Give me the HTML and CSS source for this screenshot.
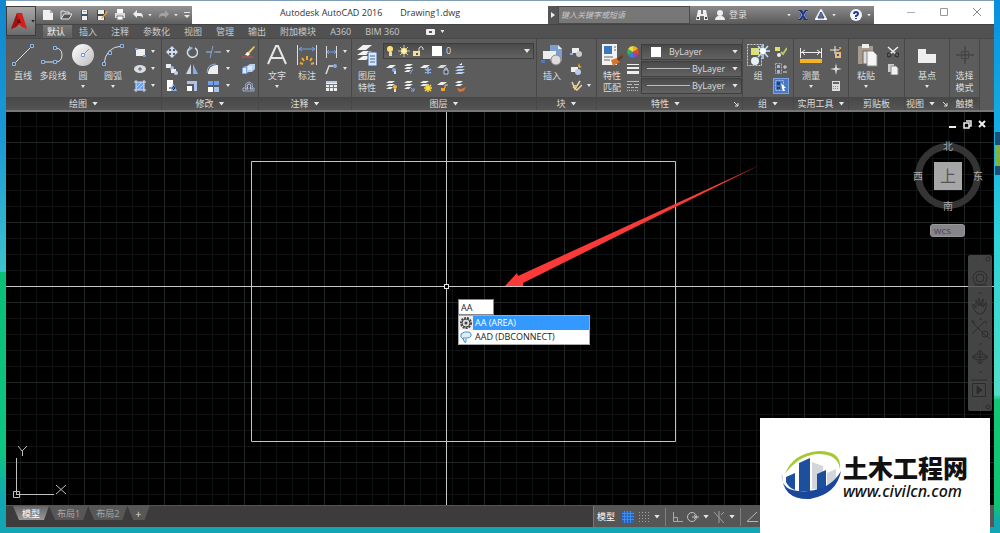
FILE: index.html
```html
<!DOCTYPE html>
<html lang="zh-CN">
  <head>
    <meta charset="UTF-8" />
    <meta name="viewport" content="width=device-width, initial-scale=1.0" />
    <title>Autodesk AutoCAD 2016 - Drawing1.dwg</title>
    <link rel="stylesheet" href="styles.css">
  </head>
  <body>
    <div class="window">
      <header class="titlebar">
        <div class="quick-access">
          <button type="button" class="tool" aria-label="新建"><svg width="12" height="12" viewBox="0 0 12 12"><path d="M1 1h7l3 3v7H1z" fill="#f0f0f0"/><path d="M8 1v3h3" fill="#aaa"/></svg></button>
          <button type="button" class="tool" aria-label="打开"><svg width="12" height="12" viewBox="0 0 12 12"><path d="M1 10V2h3l1 1h4v2" fill="none" stroke="#ddd"/><path d="M1 10l3-5h8l-3 5z" fill="#555" stroke="#e8e8e8"/></svg></button>
          <button type="button" class="tool" aria-label="保存"><svg width="12" height="12" viewBox="0 0 12 12"><path d="M3 1h7v10H3z" fill="#39576b"/><path d="M4 1h5v4H4zM4 7h5v4H4z" fill="#eee"/><path d="M5 2h3v1H5z" fill="#7fa6c0"/></svg></button>
          <button type="button" class="tool" aria-label="另存为"><svg width="12" height="12" viewBox="0 0 12 12"><path d="M1 1h8v10H1z" fill="#444"/><path d="M2 1h6v4H2zM2 7h6v4H2z" fill="#eee"/><path d="M11 2L6 8l-1 2 2-1 5-6z" fill="#e8a33a"/></svg></button>
          <button type="button" class="tool" aria-label="打印"><svg width="12" height="12" viewBox="0 0 12 12"><path d="M3 0h6v4H3z" fill="#fff"/><path d="M1 4h10v5H1z" fill="#ddd"/><path d="M3 7h6v4H3z" fill="#fff" stroke="#777"/></svg></button>
          <button type="button" class="tool" aria-label="放弃"><svg width="12" height="12" viewBox="0 0 12 12"><path d="M1 5l4-4v3h3q3 0 3 5-1-2-3-2H5v2z" fill="#eee"/></svg><i class="tri tiny"></i></button>
          <button type="button" class="tool" aria-label="重做"><svg width="12" height="12" viewBox="0 0 12 12"><path d="M11 5L7 1v3H4q-3 0-3 5 1-2 3-2h3v2z" fill="#a2a2a2"/></svg><i class="tri tiny"></i></button>
          <button type="button" class="tool more" aria-label="自定义"><svg width="6" height="7" viewBox="0 0 6 7"><path d="M0 0h6v1H0zM0 3h6L3 6z" fill="#e6e6e6"/></svg></button>
        </div>
        <h1 class="title"><span>Autodesk AutoCAD 2016</span><span>Drawing1.dwg</span></h1>
        <div class="infocenter">
          <button type="button" class="expand" aria-label="展开"><svg width="5" height="6" viewBox="0 0 5 6"><path d="M1 0l4 3-4 3z" fill="#eee"/></svg></button>
          <input class="search" type="text" aria-label="搜索" placeholder="键入关键字或短语" />
          <button type="button" class="tool" aria-label="查找"><svg width="12" height="12" viewBox="0 0 12 12"><path d="M2 1h3v4h2V1h3l2 10H8V7H4v4H0z" fill="#eee"/><path d="M1 8h2v2H1zM9 8h2v2H9z" fill="#444"/></svg></button>
          <button type="button" class="tool login"><svg width="12" height="12" viewBox="0 0 12 12"><circle cx="6" cy="4" r="3" fill="#eee"/><path d="M1 11q0-3 3-4h4q3 1 3 4z" fill="#eee"/></svg><span>登录</span></button>
          <i class="tri tiny"></i>
          <button type="button" class="tool" aria-label="Exchange"><svg width="12" height="12" viewBox="0 0 12 12"><path d="M1 1h4l1 3 2-3h3L8 6l3 5H7L6 8l-2 3H1l3-5z" fill="#1d3478"/><path d="M2 2l3 4-3 4M10 2L7 6l3 4" fill="none" stroke="#8fa8e8"/></svg></button>
          <button type="button" class="tool" aria-label="A360"><svg width="12" height="12" viewBox="0 0 12 12"><path d="M6 1l5 9H1z" fill="none" stroke="#e4e9fb" stroke-width="2"/><path d="M6 3l3 6H3z" fill="none" stroke="#3a5291"/><circle cx="6" cy="2" r="1" fill="#fff"/><circle cx="2" cy="10" r="1" fill="#fff"/><circle cx="10" cy="10" r="1" fill="#fff"/></svg><i class="tri tiny"></i></button>
          <button type="button" class="tool help" aria-label="帮助"><svg width="12" height="12" viewBox="0 0 12 12"><circle cx="6" cy="6" r="6" fill="#f4f6ff"/><path d="M4 5q0-2 2-2t2 2q0 1-2 2v1" fill="none" stroke="#223a8c" stroke-width="2"/><path d="M5 9h2v1H5z" fill="#223a8c"/></svg><i class="tri tiny"></i></button>
        </div>
        <div class="window-controls">
          <button type="button" aria-label="最小化"><svg width="10" height="10" viewBox="0 0 10 10"><path d="M1 5.500h8" stroke="#a4b0bd"/></svg></button>
          <button type="button" aria-label="最大化"><svg width="10" height="10" viewBox="0 0 10 10"><path d="M1.500 1.500h7v7h-7z" fill="none" stroke="#999"/></svg></button>
          <button type="button" aria-label="关闭"><svg width="10" height="10" viewBox="0 0 10 10"><path d="M1 1l8 8M9 1L1 9" stroke="#888"/></svg></button>
        </div>
      </header>

      <button type="button" class="app-menu" aria-label="应用程序菜单">
        <svg width="18" height="20" viewBox="0 0 18 20"><path d="M1 18L7 2h5l5 16-5-2-3-3-3 3z" fill="#d3201f"/><path d="M7 2l2 11-3 3-5 2z" fill="#a11214"/><path d="M9 7l2 5H7z" fill="#6a0a0c"/></svg>
        <i class="tri dark"></i>
      </button>

      <nav class="tabs">
        <a href="#" class="active">默认</a>
        <a href="#">插入</a>
        <a href="#">注释</a>
        <a href="#">参数化</a>
        <a href="#">视图</a>
        <a href="#">管理</a>
        <a href="#">输出</a>
        <a href="#">附加模块</a>
        <a href="#">A360</a>
        <a href="#">BIM 360</a>
        <button type="button" class="tool toggle" aria-label="最小化功能区"><svg width="9" height="6" viewBox="0 0 9 6"><rect width="9" height="6" rx="1" fill="#eee"/><path d="M3 2h3v2H3z" fill="#555"/></svg><i class="tri tiny"></i></button>
      </nav>

      <div class="ribbon">
        <section class="panel draw">
          <div class="tools">
            <button type="button" class="big"><svg width="24" height="24" viewBox="0 0 24 24"><path d="M3 21L21 3" stroke="#ddd"/><path d="M1.500 19.500h3v3h-3zM19.500 1.500h3v3h-3z" fill="#456" stroke="#8fb4ee"/></svg><span>直线</span></button>
            <button type="button" class="big"><svg width="24" height="24" viewBox="0 0 24 24"><path d="M2 19h12q7 0 7-7t-7-7" fill="none" stroke="#ddd"/><path d="M.500 17.500h3v3h-3zM12.500 17.500h3v3h-3zM12.500 3.500h3v3h-3z" fill="#456" stroke="#8fb4ee"/></svg><span>多段线</span></button>
            <button type="button" class="big"><svg width="24" height="24" viewBox="0 0 24 24"><defs><linearGradient id="disc" x1="0" y1="0" x2="1" y2="1"><stop offset="0" stop-color="#fff"/><stop offset="1" stop-color="#bcbcbc"/></linearGradient></defs><circle cx="12" cy="12" r="11" fill="url(#disc)"/><path d="M12 12l6-6" stroke="#6c9be0"/><path d="M10.500 10.500h3v3h-3z" fill="#fff" stroke="#6c9be0"/></svg><span>圆</span><i class="tri tiny"></i></button>
            <button type="button" class="big"><svg width="24" height="24" viewBox="0 0 24 24"><path d="M3 22Q4 4 21 3" fill="none" stroke="#ddd"/><path d="M1.500 19.500h3v3h-3zM7.500 8.500h3v3h-3zM19.500 1.500h3v3h-3z" fill="#456" stroke="#8fb4ee"/></svg><span>圆弧</span><i class="tri tiny"></i></button>
            <div class="small-grid one">
              <button type="button" class="tool" aria-label="矩形"><svg width="12" height="12" viewBox="0 0 12 12"><path d="M2 3h9v7H2z" fill="#eee"/><path d="M1 2h3v2H1zM9 9h3v2H9z" fill="#6fa0e6"/></svg><i class="tri tiny"></i></button>
              <button type="button" class="tool" aria-label="椭圆"><svg width="12" height="12" viewBox="0 0 12 12"><ellipse cx="6" cy="6" rx="6" ry="4" fill="#ddd"/><path d="M4 6h4M6 4v4" stroke="#47638f"/></svg><i class="tri tiny"></i></button>
              <button type="button" class="tool" aria-label="图案填充"><svg width="12" height="12" viewBox="0 0 12 12"><path d="M2 2h8v8H2z" fill="#6f9fe8"/><path d="M0 2h12M0 10h12M2 0v12M10 0v12" stroke="#d8e4f8"/><path d="M2 8l6-6M4 10l6-6" stroke="#b7cff5"/></svg><i class="tri tiny"></i></button>
            </div>
          </div>
          <h2>绘图 <i class="tri"></i></h2>
        </section>

        <section class="panel modify">
          <div class="tools">
            <div class="small-grid four">
              <button type="button" class="tool" aria-label="移动"><svg width="12" height="12" viewBox="0 0 12 12"><path d="M6 0l3 3H7v2h2V3l3 3-3 3V7H7v2h2l-3 3-3-3h2V7H3v2L0 6l3-3v2h2V3H3z" fill="#cfdcf3"/></svg></button>
              <button type="button" class="tool" aria-label="旋转"><svg width="12" height="12" viewBox="0 0 12 12"><path d="M4 2a5 5 0 1 0 5 0" fill="none" stroke="#d6dbe6" stroke-width="1.500"/><path d="M3 0l4 2-4 3z" fill="#8fb4ee"/></svg></button>
              <button type="button" class="tool" aria-label="修剪"><svg width="15" height="12" viewBox="0 0 15 12"><path d="M0 6h6M10 6h5" stroke="#a8bfe6"/><path d="M7 0L4 12" stroke="#7fa5e0"/><path d="M8 6h2" stroke="#9ab"/></svg><i class="tri tiny"></i></button>
              <button type="button" class="tool" aria-label="删除"><svg width="13" height="12" viewBox="0 0 13 12"><path d="M12 0l1 1-6 7-2-1z" fill="#f4cf55"/><path d="M5 6l3 2-2 2-3-1z" fill="#fff"/><path d="M3 9l3 1H1z" fill="#d33"/><path d="M0 11h11" stroke="#c55"/></svg></button>
              <button type="button" class="tool" aria-label="复制"><svg width="12" height="12" viewBox="0 0 12 12"><path d="M0 1h5v4H0z" fill="#eee"/><circle cx="6" cy="5" r="2" fill="#9bb8e6"/><path d="M5 6h5v4H5z" fill="#eee"/><circle cx="10" cy="10" r="2" fill="#bcd0f2"/></svg></button>
              <button type="button" class="tool" aria-label="镜像"><svg width="12" height="12" viewBox="0 0 12 12"><path d="M5 1v10H0z" fill="#cfd6e2"/><path d="M7 1v10h5z" fill="#87abea"/></svg></button>
              <button type="button" class="tool" aria-label="圆角"><svg width="15" height="12" viewBox="0 0 15 12"><path d="M2 11V9q1-6 8-7h2v9z" fill="#eee"/><path d="M1 10q0-9 9-9" fill="none" stroke="#87abea"/></svg><i class="tri tiny"></i></button>
              <button type="button" class="tool" aria-label="分解"><svg width="13" height="12" viewBox="0 0 13 12"><path d="M0 5l3-2h4v6l-3 2H0z" fill="#82a8df"/><path d="M5 3l3-2h5v5l-3 3H5z" fill="#b9cfef"/><path d="M1 5h3v5H1zM6 3h4v4H6z" fill="#dce7f7"/></svg></button>
              <button type="button" class="tool" aria-label="拉伸"><svg width="12" height="12" viewBox="0 0 12 12"><path d="M1 0h6v11H1z" fill="#fff"/><path d="M7 3l4 8H5z" fill="#87abea"/><path d="M3 8h5M7 6l2 2-2 2" stroke="#234" fill="none"/></svg></button>
              <button type="button" class="tool" aria-label="缩放"><svg width="12" height="12" viewBox="0 0 12 12"><path d="M1 1h10v10H8V4H1z" fill="#a9c3ee"/><path d="M1 6h5v5H1z" fill="#fff"/></svg></button>
              <button type="button" class="tool" aria-label="阵列"><svg width="15" height="12" viewBox="0 0 15 12"><path d="M2 1h5v4H2zM8 1h5v4H8z" fill="#6fa0e6"/><path d="M8 7h5v5H8z" fill="#a9c3ee"/><path d="M2 7h5v5H2z" fill="#fff"/></svg><i class="tri tiny"></i></button>
              <button type="button" class="tool" aria-label="偏移"><svg width="13" height="12" viewBox="0 0 13 12"><path d="M1 11V8h3q-2-5 3-6 5 1 3 6h2v3z" fill="none" stroke="#95aed6"/><path d="M3 9h3q-2-5 1-5t1 5h3" fill="none" stroke="#c8d2e4"/></svg></button>
            </div>
          </div>
          <h2>修改 <i class="tri"></i></h2>
        </section>

        <section class="panel annotate">
          <div class="tools">
            <button type="button" class="big"><svg width="24" height="24" viewBox="0 0 24 24"><path d="M3 21L11 3h2l8 18M6 15h12" fill="none" stroke="#e6e6e6" stroke-width="2"/></svg><span>文字</span><i class="tri tiny"></i></button>
            <button type="button" class="big"><svg width="24" height="24" viewBox="0 0 24 24"><path d="M2.500 2v20M21.500 2v20" stroke="#ddd"/><path d="M4 6h16M7 4L4 6l3 2M17 4l3 2-3 2" stroke="#6fa0e6" fill="none"/><path d="M12 13v4M7 15l2 3M17 15l-2 3M5 20l3 1M19 20l-3 1" stroke="#f2a62c" stroke-width="2"/></svg><span>标注</span></button>
            <div class="small-grid one">
              <button type="button" class="tool" aria-label="线性"><svg width="13" height="12" viewBox="0 0 13 12"><path d="M1.500 0v12M11.500 0v12" stroke="#ddd"/><path d="M2 6h9M4 4L2 6l2 2M9 4l2 2-2 2" stroke="#6fa0e6" fill="none"/></svg><i class="tri tiny"></i></button>
              <button type="button" class="tool" aria-label="引线"><svg width="13" height="12" viewBox="0 0 13 12"><path d="M1 11l3-8h4" fill="none" stroke="#ddd" stroke-width="1.500"/><circle cx="10" cy="3" r="2" fill="#87abea"/></svg><i class="tri tiny"></i></button>
              <button type="button" class="tool" aria-label="表格"><svg width="12" height="12" viewBox="0 0 12 12"><path d="M1 1h11v10H1z" fill="#eee"/><path d="M1 4.500h11M1 7.500h11M4.500 4v7M8.500 4v7" stroke="#777"/><path d="M1 1h11v2H1z" fill="#b9ccec"/></svg></button>
            </div>
          </div>
          <h2>注释 <i class="tri"></i></h2>
        </section>

        <section class="panel layers">
          <div class="tools">
            <button type="button" class="big"><svg width="24" height="24" viewBox="0 0 24 24"><path d="M2 7l6-5h9l-6 5zM2 12l6-4h9l-6 4zM2 17l6-4h9l-6 4z" fill="#f2f2f2"/><path d="M13 9h9v14h-9z" fill="#dce8fa" stroke="#3d6296"/><path d="M15 13h5M15 16h5M15 19h5" stroke="#3d6296"/></svg><span>图层<br>特性</span></button>
            <div class="layer-side">
              <div class="combo">
                <svg width="44" height="12" viewBox="0 0 44 12"><circle cx="6" cy="4" r="3" fill="#ffe27a"/><path d="M5 7h3v4H5z" fill="#e8dcb0"/><path d="M20 0v12M14 6h12M16 2l8 8M24 2l-8 8" stroke="#cfc890"/><circle cx="20" cy="6" r="3" fill="#fff0a0"/><path d="M29 6h7v5h-7z" fill="#f6e08a"/><path d="M35 6V3q2-3 4 0v2" fill="none" stroke="#ddd"/><path d="M32 8h2v2h-2z" fill="#555"/></svg>
                <i class="swatch"></i>
                <select aria-label="图层"><option>0</option></select>
                <i class="tri"></i>
              </div>
              <div class="small-grid five">
                <button type="button" class="tool" aria-label="关闭图层"><svg width="12" height="12" viewBox="0 0 12 12"><path d="M0 5l4-3h6L6 5z" fill="#eee"/><circle cx="8" cy="7" r="2" fill="#7fa8e8"/><path d="M8 8h2v3H8z" fill="#cfe0fb"/></svg></button>
                <button type="button" class="tool" aria-label="隔离"><svg width="12" height="12" viewBox="0 0 12 12"><path d="M1 3l3-2h6L7 3zM1 6l3-2h6L7 6zM1 9l3-2h4L6 9z" fill="#eee"/><path d="M10 6L7 11" stroke="#7fa8e8"/></svg></button>
                <button type="button" class="tool" aria-label="冻结"><svg width="12" height="12" viewBox="0 0 12 12"><path d="M0 5l4-3h6L6 5z" fill="#eee"/><path d="M8 4v7M5 6l6 4M11 6l-6 4" stroke="#8fb8f6" stroke-width="1.500"/></svg></button>
                <button type="button" class="tool" aria-label="锁定"><svg width="12" height="12" viewBox="0 0 12 12"><path d="M0 5l4-3h6L6 5z" fill="#ddd"/><path d="M7 7h4v4H7z" fill="#444" stroke="#b9ccec"/><path d="M8 7V5h2v2" fill="none" stroke="#ccc"/></svg></button>
                <button type="button" class="tool" aria-label="置为当前"><svg width="12" height="12" viewBox="0 0 12 12"><path d="M1 5l3-2h7L8 5zM1 8l3-2h7L8 8zM1 11l3-2h7l-3 2z" fill="#b5cdf2"/><path d="M5 2l3-2v2z" fill="#fff"/></svg></button>
                <button type="button" class="tool" aria-label="打开所有图层"><svg width="12" height="12" viewBox="0 0 12 12"><path d="M0 3l3-2h6L6 3zM0 6l3-2h6L6 6zM0 9l3-2h4L5 9z" fill="#eee"/><circle cx="9" cy="7" r="2" fill="#f4b63f"/><path d="M8 9h2v3H8z" fill="#eee0a0"/></svg></button>
                <button type="button" class="tool" aria-label="取消隔离"><svg width="12" height="12" viewBox="0 0 12 12"><path d="M1 3l3-2h6L7 3zM1 6l3-2h6L7 6zM1 9l3-2h4L6 9z" fill="#eee"/><path d="M7 7l4 4M11 8v3H8" stroke="#7fa8e8" fill="none"/></svg></button>
                <button type="button" class="tool" aria-label="解冻所有图层"><svg width="12" height="12" viewBox="0 0 12 12"><path d="M0 3l3-2h6L6 3zM0 6l3-2h6L6 6z" fill="#eee"/><path d="M8 4v8M4 8h8M5 5l6 6M11 5l-6 6" stroke="#ffd93b" stroke-width="1.500"/></svg></button>
                <button type="button" class="tool" aria-label="解锁"><svg width="12" height="12" viewBox="0 0 12 12"><path d="M0 5l4-3h6L6 5z" fill="#eee"/><path d="M4 8h4v3H4z" fill="#f2a62c"/><path d="M8 8V5h3" fill="none" stroke="#f4c96a"/></svg></button>
                <button type="button" class="tool" aria-label="图层匹配"><svg width="12" height="12" viewBox="0 0 12 12"><path d="M1 3l3-2h5L6 3zM1 6l3-2h5L6 6z" fill="#eee"/><path d="M3 8l4 1 5-2-2 4-5 1z" fill="#d9742b"/></svg></button>
              </div>
            </div>
          </div>
          <h2>图层 <i class="tri"></i></h2>
        </section>

        <section class="panel block">
          <div class="tools">
            <button type="button" class="big"><svg width="24" height="24" viewBox="0 0 24 24"><path d="M10 2h8l4 4v12H10z" fill="#7f9fcb"/><path d="M18 2v4h4" fill="#dfeaff"/><path d="M3 8h13v8H3z" fill="#eee"/><path d="M1 17h4v3H1z" fill="#4f79b8"/><circle cx="16" cy="17" r="5" fill="#ddd" stroke="#888"/></svg><span>插入</span></button>
            <div class="small-grid one">
              <button type="button" class="tool" aria-label="创建块"><svg width="12" height="12" viewBox="0 0 12 12"><path d="M2 2h7v5H2z" fill="#eee"/><circle cx="9" cy="8" r="3" fill="#ccc"/><path d="M0 7h3v2H0z" fill="#87abea"/></svg></button>
              <button type="button" class="tool" aria-label="编辑块"><svg width="12" height="12" viewBox="0 0 12 12"><path d="M1 4h7v5H1z" fill="#eee"/><circle cx="8" cy="9" r="3" fill="#b9ccec"/><path d="M9 0l1 3 2 1-3 1-1-2z" fill="#f2a62c"/></svg></button>
              <button type="button" class="tool" aria-label="编辑属性"><svg width="12" height="12" viewBox="0 0 12 12"><path d="M2 2l3 7 5-8M3 7l4 3 5-5" fill="none" stroke="#e8d9b0" stroke-width="1.500"/><path d="M4 5h3v3H4z" fill="#f4c23f"/></svg><i class="tri tiny"></i></button>
            </div>
          </div>
          <h2>块 <i class="tri"></i></h2>
        </section>

        <section class="panel properties">
          <div class="tools">
            <button type="button" class="big"><svg width="24" height="24" viewBox="0 0 24 24"><path d="M2 1h15v21H2z" fill="#f2f2f2"/><path d="M4 3h8v8H4z" fill="#3d77bd"/><path d="M14 4h2M14 7h2M4 14h9M4 17h6" stroke="#666"/><path d="M11 17l6-2 3 4-7 4z" fill="#d9742b"/><path d="M17 16l5-4 1 2-4 4z" fill="#6b3a17"/></svg><span>特性<br>匹配</span></button>
            <div class="property-rows">
              <label class="property"><svg width="12" height="12" viewBox="0 0 12 12"><path d="M6 6V0a6 6 0 0 1 5 3z" fill="#f2b01e"/><path d="M6 6l5-3a6 6 0 0 1 0 6z" fill="#e2452b"/><path d="M6 6l5 3a6 6 0 0 1-5 3z" fill="#9b3fc4"/><path d="M6 6v6a6 6 0 0 1-5-3z" fill="#3b7be0"/><path d="M6 6L1 9a6 6 0 0 1 0-6z" fill="#35b24a"/><path d="M6 6L1 3a6 6 0 0 1 5-3z" fill="#e6e04a"/></svg>
                <span class="combo"><i class="swatch"></i><select aria-label="对象颜色"><option>ByLayer</option></select><i class="tri"></i></span></label>
              <label class="property"><svg width="12" height="12" viewBox="0 0 12 12"><path d="M0 1h12v1H0zM0 4h12v2H0zM0 8h12v3H0z" fill="#eee"/></svg>
                <span class="combo"><i class="rule"></i><select aria-label="线宽"><option>ByLayer</option></select><i class="tri"></i></span></label>
              <label class="property"><svg width="12" height="12" viewBox="0 0 12 12"><path d="M0 1.500h12" stroke="#bbb"/><path d="M0 4.500h12" stroke="#bbb" stroke-dasharray="5 2"/><path d="M0 7.500h12" stroke="#bbb" stroke-dasharray="3 1"/><path d="M0 10.500h12" stroke="#bbb" stroke-dasharray="1 1"/></svg>
                <span class="combo"><i class="rule"></i><select aria-label="线型"><option>ByLayer</option></select><i class="tri"></i></span></label>
            </div>
          </div>
          <h2>特性 <i class="tri"></i><svg class="launcher" width="6" height="6" viewBox="0 0 6 6"><path d="M1 1l4 4M5 2v3H2" fill="none" stroke="#ddd"/></svg></h2>
        </section>

        <section class="panel group">
          <div class="tools">
            <button type="button" class="big"><svg width="24" height="24" viewBox="0 0 24 24"><path d="M1.500 1.500h14v21h-14z" fill="none" stroke="#ccc" stroke-dasharray="2 1"/><path d="M5 5h8v7H5z" fill="#dbe070"/><circle cx="9" cy="18" r="4" fill="#e6f2fa"/><path d="M17 1v15M10 8h14M12 3l10 11M22 3L12 14" stroke="#bfe2ff" stroke-width="1.500"/><circle cx="17" cy="8" r="3" fill="#fff"/></svg><span>组</span></button>
            <div class="small-grid one">
              <button type="button" class="tool" aria-label="解除编组"><svg width="12" height="12" viewBox="0 0 12 12"><path d="M0 1h5v4H0z" fill="#dbe070"/><circle cx="4" cy="9" r="2" fill="#eee"/><path d="M6 6l2 2 4-6" fill="none" stroke="#bcc36a" stroke-width="2"/></svg></button>
              <button type="button" class="tool" aria-label="组编辑"><svg width="12" height="12" viewBox="0 0 12 12"><path d="M.500.500h6v10h-6z" fill="none" stroke="#aaa" stroke-dasharray="2 1"/><path d="M2 2h3v3H2zM2 7h3v3H2z" fill="#9bb8e6"/><path d="M8 4h4M10 2v4M8 9h4" stroke="#ddd"/></svg></button>
              <button type="button" class="tool selected" aria-label="组选择"><svg width="12" height="12" viewBox="0 0 12 12"><path d="M.500.500h8v10h-8z" fill="none" stroke="#9bbcf0" stroke-dasharray="2 1"/><path d="M2 2h3v3H2zM2 7h3v2H2z" fill="#223f66"/><path d="M6 3l5 5H9l1 3H8L7 8z" fill="#fff"/></svg></button>
            </div>
          </div>
          <h2>组 <i class="tri"></i></h2>
        </section>

        <section class="panel utilities">
          <div class="tools">
            <button type="button" class="big"><svg width="24" height="24" viewBox="0 0 24 24"><path d="M1.500 5v10M22.500 5v10M2 9.500h20M6 7L3 9l3 3M18 7l3 2-3 3" fill="none" stroke="#eee"/><path d="M1 16h22v4H1z" fill="#f5b224"/></svg><span>测量</span><i class="tri tiny"></i></button>
            <div class="small-grid one">
              <button type="button" class="tool" aria-label="快速选择"><svg width="12" height="12" viewBox="0 0 12 12"><path d="M5 0v8M0 4h9" stroke="#eee"/><path d="M5 6h6v6H5z" fill="#e4b98c"/><path d="M7 8h2v2H7z" fill="#555"/><path d="M9 1l2 2M11 1L9 4" stroke="#f2a62c"/></svg></button>
              <button type="button" class="tool" aria-label="点"><svg width="12" height="12" viewBox="0 0 12 12"><path d="M6 0l1 5 5 1-5 1-1 5-1-5-5-1 5-1z" fill="#ddd"/></svg></button>
              <button type="button" class="tool" aria-label="计算器"><svg width="12" height="12" viewBox="0 0 12 12"><path d="M2 1h8v10H2z" fill="#ddd"/><path d="M3 2h6v2H3z" fill="#666"/><path d="M3 6.500h6M3 8.500h6" stroke="#888" stroke-dasharray="1 1"/></svg></button>
            </div>
          </div>
          <h2>实用工具 <i class="tri"></i></h2>
        </section>

        <section class="panel clipboard">
          <div class="tools">
            <button type="button" class="big"><svg width="24" height="24" viewBox="0 0 24 24"><path d="M4 3h15v18H4z" fill="#a89b8c"/><path d="M8 1h7v4H8z" fill="#eee"/><path d="M9 8h7v13H9z" fill="#ddd" stroke="#666"/><path d="M13 8h6l4 4v11H13z" fill="#f5f5f5" stroke="#888"/></svg><span>粘贴</span><i class="tri tiny"></i></button>
            <div class="small-grid one">
              <button type="button" class="tool" aria-label="剪切"><svg width="12" height="12" viewBox="0 0 12 12"><path d="M1 1l8 7M11 1L3 8" stroke="#eee" stroke-width="1.500"/><circle cx="2" cy="9" r="2" fill="none" stroke="#222"/><circle cx="10" cy="9" r="2" fill="none" stroke="#222"/></svg></button>
              <button type="button" class="tool" aria-label="复制剪裁"><svg width="12" height="12" viewBox="0 0 12 12"><path d="M1 1h6v8H1z" fill="#ccc"/><path d="M4 3h5l2 2v7H4z" fill="#f2f2f2" stroke="#888"/></svg></button>
            </div>
          </div>
          <h2>剪贴板</h2>
        </section>

        <section class="panel view">
          <div class="tools">
            <button type="button" class="big"><svg width="24" height="24" viewBox="0 0 24 24"><path d="M3 6h8v5h10v9H3z" fill="#eee"/></svg><span>基点</span><i class="tri tiny"></i></button>
          </div>
          <h2>视图 <i class="tri"></i><svg class="launcher" width="6" height="6" viewBox="0 0 6 6"><path d="M1 1l4 4M5 2v3H2" fill="none" stroke="#ddd"/></svg></h2>
        </section>

        <section class="panel touch">
          <div class="tools">
            <button type="button" class="big"><svg width="24" height="24" viewBox="0 0 24 24"><path d="M12 3v18M3 12h18" stroke="#3a3a3a"/><path d="M8.500 8.500h7v7h-7z" fill="none" stroke="#444"/></svg><span>选择<br>模式</span></button>
          </div>
          <h2>触摸</h2>
        </section>
      </div>

      <main class="canvas">
        <svg class="drawing">
          <!-- drawn rectangle -->
          <path d="M245.500 49.500h424v280h-424z" fill="none" stroke="#c4c4c4"/>
          <!-- crosshair -->
          <line x1="0" y1="174.500" x2="100%" y2="174.500" stroke="#c8c8c8"/>
          <line x1="440.500" y1="0" x2="440.500" y2="100%" stroke="#c8c8c8"/>
          <rect x="438.500" y="172.500" width="4" height="4" fill="#000" stroke="#e8e8e8"/>
          <!-- pointer arrow -->
          <path d="M499 174l12-13 1 3L754 53 517 171v3z" fill="#f93a38"/>
          <!-- UCS icon -->
          <path d="M10.500 346v36M10 382.500h38M7.500 379.500h6v6h-6z" fill="none" stroke="#c0c0c0"/>
          <path d="M12 334l4 5 5-5M16.500 339v5M50 373l10 9M60 373l-10 9" fill="none" stroke="#c0c0c0"/>
        </svg>

        <div class="doc-controls">
          <button type="button" aria-label="最小化图形"><svg width="9" height="9" viewBox="0 0 9 9"><path d="M1 6h7v2H1z" fill="#eee"/></svg></button>
          <button type="button" aria-label="还原图形"><svg width="9" height="9" viewBox="0 0 9 9"><path d="M3 1h5v5H6M1 3h5v5H1z" fill="none" stroke="#eee" stroke-width="1.500"/></svg></button>
          <button type="button" aria-label="关闭图形"><svg width="9" height="9" viewBox="0 0 9 9"><path d="M1 1l6 6M7 1L1 7" stroke="#eee" stroke-width="2"/></svg></button>
        </div>

        <div class="viewcube">
          <span class="north">北</span>
          <span class="west">西</span>
          <button type="button" class="face">上</button>
          <span class="east">东</span>
          <span class="south">南</span>
        </div>
        <button type="button" class="wcs">WCS</button>

        <div class="navbar">
          <svg width="24" height="156" viewBox="0 0 24 156" fill="none" stroke="#2c2c2c">
            <circle cx="20" cy="4" r="2"/>
            <circle cx="12" cy="23" r="7"/><circle cx="12" cy="23" r="4"/><path d="M6 30h13M11 38h3"/>
            <path d="M7 56q-3-5-2-7l3 4v-8l3 6v-8l2 8 2-7v8l3-5q1 7-3 11-4 3-8-2M11 64h3"/>
            <path d="M4 67l14 14M17 66L4 79M3 66h3v3M18 66v3"/><circle cx="17" cy="79" r="3"/><path d="M19 81l3 3M11 89h3"/>
            <path d="M12 95v14M4 102h16M9 98l3-3 3 3M9 106l3 3 3-3"/><ellipse cx="12" cy="102" rx="7" ry="3"/><path d="M11 117h3"/>
            <path d="M4.500 128.500h13v13h-13zM3 125h16" /><path d="M9 131l5 4-5 4z" fill="#2c2c2c"/>
            <circle cx="20" cy="152" r="2"/>
          </svg>
        </div>

        <div class="command">
          <input type="text" class="command-input" aria-label="命令" value="AA" />
          <ul class="suggestions">
            <li class="current"><svg width="14" height="14" viewBox="0 0 14 14"><path d="M0 0h14v14H0z" fill="#eee"/><circle cx="7" cy="7" r="5" fill="none" stroke="#444" stroke-width="2" stroke-dasharray="2 1"/><circle cx="7" cy="7" r="4" fill="#ddd" stroke="#444"/><circle cx="7" cy="7" r="1.500" fill="#444"/></svg><span>AA (AREA)</span></li>
            <li><svg width="14" height="14" viewBox="0 0 14 14"><path d="M4 9Q1 8 2 4q3-3 8-2 3 1 2 4-1 2-4 2H4l1 3q0 2 2 1V9" fill="#dceefb" stroke="#4a8dc4"/></svg><span>AAD (DBCONNECT)</span></li>
          </ul>
        </div>
      </main>

      <footer class="bottom">
        <nav class="layouts">
          <a href="#" class="current">模型</a>
          <a href="#">布局1</a>
          <a href="#">布局2</a>
          <button type="button" class="add">+</button>
        </nav>
        <div class="status">
          <button type="button" class="tool model">模型</button>
          <button type="button" class="tool" aria-label="栅格"><svg width="12" height="12" viewBox="0 0 12 12"><path d="M0 0h12v12H0z" fill="#2b62b4"/><path d="M0 2.500h12M0 5.500h12M0 8.500h12M2.500 0v12M5.500 0v12M8.500 0v12" stroke="#3f8cf0"/></svg></button>
          <button type="button" class="tool" aria-label="捕捉"><svg width="12" height="12" viewBox="0 0 12 12"><path d="M1 1.500h11M1 4.500h11M1 7.500h11M1 10.500h11" stroke="#a0a0a0" stroke-dasharray="1 2"/></svg></button>
          <i class="tri"></i>
          <i class="divider"></i>
          <button type="button" class="tool" aria-label="正交"><svg width="12" height="12" viewBox="0 0 12 12"><path d="M2.500 1v9.500H12M3 6.500h3.500V10" fill="none" stroke="#aaa"/></svg></button>
          <button type="button" class="tool" aria-label="极轴"><svg width="12" height="12" viewBox="0 0 12 12"><circle cx="5" cy="6" r="4.500" fill="none" stroke="#c0c0c0"/><path d="M5 6h7M7 4l2 2-2 2" fill="none" stroke="#c0c0c0"/></svg></button>
          <i class="tri"></i>
          <button type="button" class="tool" aria-label="等轴测"><svg width="12" height="12" viewBox="0 0 12 12"><path d="M1 1l10 11M6 0v12M11 1L8 4" stroke="#a0a0a0"/></svg></button>
          <i class="tri"></i>
          <i class="divider"></i>
          <button type="button" class="tool" aria-label="对象追踪"><svg width="12" height="12" viewBox="0 0 12 12"><path d="M11 1L1 10.500h11" fill="none" stroke="#b8b8b8"/></svg></button>
        </div>
      </footer>
    </div>

    <aside class="watermark">
      <svg width="62" height="52" viewBox="0 0 62 52">
        <path d="M4 25Q12 4 38 2q23 0 21 18-2-15-22-15Q18 6 4 25z" fill="#a5c92f"/>
        <path d="M31 13l11 4v23H31zM46 24l9-4v15l-9 6z" fill="#d3d7db"/>
        <path d="M5 28l9-4v17q-7-3-9-8zM18 14l11-5v33H18z" fill="#1d4f9f"/>
        <path d="M36 25l9-4v19l-9 2z" fill="#1d4f9f"/>
        <path d="M1 25q-2 19 26 17 23-2 33-20-4 23-31 28Q1 51 1 25z" fill="#1b479b"/>
      </svg>
      <div class="brand">
        <strong>土木工程网</strong>
        <em>www.civilcn.com</em>
      </div>
    </aside>
  </body>
</html>
```

FILE: styles.css
```css
* {
  box-sizing: border-box;
}

body {
  margin: 0;
  padding: 0 6px 6px;
  min-height: 100vh;
  display: flex;
  font-family: "Open Sans", "Noto Sans CJK SC", sans-serif;
  font-size: 9px;
  line-height: 12px;
  color: #dcdcdc;
  background:
    linear-gradient(#1d4f73 0 30%, #7fb53a 30% 80%, #1d4f73 80%) right 132px / 5px 43px no-repeat,
    linear-gradient(#1187cf 0, #1a97d6 25%, #3cc3cc 51%, #0abf76 51%, #10c483 85%, #12a5b4 94%) left / 6px 100% no-repeat,
    linear-gradient(#0a8fdc 0, #15aee6 25%, #2fd3d9 45%, #4fe0c8 74%, #12c877 75%, #10c474 95%, #12a5b4 98%) right / 6px 100% no-repeat,
    #12a5b4;
}

button,
input,
select {
  font: inherit;
  color: inherit;
  margin: 0;
  padding: 0;
  border: none;
  border-radius: 0;
  background: none;
}

button {
  cursor: pointer;
}

svg {
  display: block;
  flex: none;
}

a {
  color: inherit;
  text-decoration: none;
}

.window {
  flex: 1;
  min-width: 0;
  display: flex;
  flex-direction: column;
  position: relative;
  background: #545454;
}

/* small down arrows */
.tri {
  flex: none;
  display: inline-block;
  width: 6px;
  height: 4px;
  background: #e6e6e6;
  clip-path: polygon(0 0, 100% 0, 50% 100%);
}

.tri.tiny {
  width: 4px;
  height: 3px;
}

.tri.dark {
  background: #222;
}

.tool {
  display: flex;
  align-items: center;
  gap: 5px;
}

/* title bar */
.titlebar {
  display: flex;
  height: 24px;
  background: #fff;
  border-top: 1px solid #7f9db5;
}

.quick-access {
  display: flex;
  align-items: center;
  gap: 6px;
  width: 186px;
  padding-left: 36px;
  margin-top: 5px;
  background: linear-gradient(#939393, #5e5e5e);
}

.quick-access .tool {
  gap: 4px;
}

.title {
  flex: 1;
  display: flex;
  justify-content: center;
  gap: 18px;
  margin: 0;
  font-size: 9px;
  font-weight: normal;
  line-height: 23px;
  color: #333;
}

.infocenter {
  display: flex;
  align-items: center;
  gap: 6px;
  width: 326px;
  margin-top: 5px;
  padding-right: 3px;
  background: linear-gradient(#8a8a8a, #5a5a5a);
}

.expand {
  align-self: stretch;
  width: 10px;
  padding-left: 2px;
  background: #555;
}

.search {
  align-self: stretch;
  width: 132px;
  margin-left: -6px;
  padding-left: 2px;
  font-size: 8px;
  font-style: italic;
  background: #777;
  border: 1px solid #4a4a4a;
}

.search::placeholder {
  color: #c8c8c8;
}

.login {
  margin-right: auto;
  gap: 3px;
}

.help {
  padding-left: 8px;
}

.window-controls {
  display: flex;
  justify-content: space-between;
  align-items: center;
  width: 120px;
  padding: 0 12px 2px 32px;
}

.app-menu {
  position: absolute;
  top: 6px;
  left: 0;
  width: 30px;
  height: 30px;
  padding-left: 3px;
  display: flex;
  align-items: center;
  gap: 3px;
  background: linear-gradient(#a8a8a8, #6a6a6a);
  border: 1px solid #3c3c3c;
}

.app-menu .tri {
  width: 4px;
  height: 3px;
}

/* ribbon tabs */
.tabs {
  display: flex;
  height: 14px;
  padding-left: 37px;
  background: #515151;
  border-top: 1px solid #444;
  color: #c8c8c8;
}

.tabs a {
  padding: 0 7px;
  line-height: 14px;
}

.tabs a:first-child {
  padding: 0 7px 0 4px;
}

.tabs .active {
  color: #f2f2f2;
  background: linear-gradient(#777, #5e5e5e);
}

.toggle {
  margin-left: 20px;
}

/* ribbon panels */
.ribbon {
  display: flex;
  height: 74px;
  background: #5a5a5a;
  border-top: 1px solid #484848;
  border-bottom: 2px solid #777;
}

.panel {
  display: flex;
  flex-direction: column;
  flex: none;
  border-right: 1px solid #484848;
  background: #5c5c5c;
}

.panel h2 {
  display: flex;
  align-items: center;
  justify-content: center;
  gap: 5px;
  margin: 0;
  height: 13px;
  font-size: 9px;
  font-weight: normal;
  background: linear-gradient(#484848, #545454);
}

.tools {
  flex: 1;
  display: flex;
  align-items: flex-start;
  padding-top: 4px;
}

.big {
  width: 30px;
  display: flex;
  flex-direction: column;
  align-items: center;
  white-space: nowrap;
}

.big span {
  margin-top: 3px;
}

.big .tri {
  margin-top: 3px;
}

.small-grid {
  display: grid;
  grid-auto-rows: 17px;
  align-items: center;
}

.small-grid .tool {
  height: 17px;
}

.one {
  padding-left: 6px;
}

.four {
  grid-template-columns: 20px 20px 36px 14px;
  padding-left: 4px;
}

.five {
  grid-template-columns: repeat(5, 17px);
  padding-left: 4px;
}

.draw {
  width: 156px;
}

.draw .tools {
  padding-left: 2px;
}

.modify {
  width: 97px;
}

.annotate {
  width: 93px;
}

.annotate .tools {
  padding-left: 3px;
}

.annotate .one {
  padding-left: 3px;
}

.layers {
  width: 185px;
}

.layer-side {
  flex: 1;
}

.block {
  width: 60px;
}

.block .one {
  padding-left: 3px;
}

.properties {
  width: 146px;
}

.property-rows {
  flex: 1;
}

.group {
  width: 51px;
}

.group .one {
  padding-left: 2px;
}

.utilities {
  width: 55px;
}

.utilities .tools {
  padding-left: 2px;
}

.utilities .one {
  padding-left: 4px;
}

.clipboard {
  width: 56px;
}

.clipboard .tools {
  padding-left: 2px;
}

.view {
  width: 45px;
}

.view .big {
  width: 44px;
}

.touch {
  width: 30px;
}

.launcher {
  margin-left: 2px;
}

.properties .launcher {
  margin-left: auto;
  margin-right: 3px;
}

.properties h2 {
  padding-left: 54px;
  justify-content: flex-start;
}

.small-grid .selected {
  width: 16px;
  height: 16px;
  justify-content: center;
  margin-left: -2px;
  background: #4a78c4;
  border: 1px solid #7ba3e6;
}

/* drop-downs */
.combo {
  flex: 1;
  display: flex;
  align-items: center;
  gap: 4px;
  height: 16px;
  padding-right: 3px;
  background: linear-gradient(#4a4a4a, #626262);
  border: 1px solid #3e3e3e;
}

.combo select {
  flex: 1;
  min-width: 0;
  appearance: none;
  outline: none;
}

.layer-side .combo {
  margin: 0 2px 1px 1px;
}

.swatch {
  width: 10px;
  height: 10px;
  background: #fff;
}

.property {
  display: flex;
  align-items: center;
  gap: 2px;
  height: 17px;
}

.property .swatch {
  margin: 0 4px 0 9px;
}

.rule {
  width: 43px;
  height: 1px;
  margin: 0 -2px 0 5px;
  background: #bbb;
}

/* drawing area */
.canvas {
  flex: 1;
  min-height: 300px;
  position: relative;
  overflow: hidden;
  background:
    repeating-linear-gradient(90deg, #212626 0 1px, transparent 1px 80px) 78px 0,
    repeating-linear-gradient(#212626 0 1px, transparent 1px 80px) 0 30px,
    repeating-linear-gradient(90deg, #101313 0 1px, transparent 1px 16px) 14px 0,
    repeating-linear-gradient(#101313 0 1px, transparent 1px 16px) 0 14px,
    #000;
  background-size: 80px 80px;
}

.drawing {
  width: 100%;
  height: 100%;
  position: absolute;
}

.doc-controls {
  position: absolute;
  top: 8px;
  right: 7px;
  display: flex;
  gap: 6px;
}

.viewcube {
  position: absolute;
  top: 31px;
  right: 13px;
  width: 66px;
  height: 66px;
  display: grid;
  grid-template-columns: 1fr 28px 1fr;
  grid-template-rows: 1fr 28px 1fr;
  place-items: center;
  border: 7px solid #343434;
  border-radius: 50%;
  font-size: 10px;
  color: #aaa;
}

.north,
.south {
  grid-column: 1 / 4;
}

.north {
  margin-top: -20px;
}

.south {
  margin-bottom: -20px;
}

.west {
  margin-left: -20px;
}

.east {
  margin-right: -20px;
}

.face {
  width: 28px;
  height: 28px;
  font-size: 16px;
  line-height: 26px;
  color: #555;
  background: #a6a6a6;
}

.wcs {
  position: absolute;
  top: 112px;
  right: 29px;
  width: 35px;
  height: 13px;
  padding-left: 3px;
  font-size: 8px;
  line-height: 10px;
  text-align: left;
  color: #3c3c44;
  background: #85858b;
  border: 1px solid #999;
  border-radius: 3px;
}

.navbar {
  position: absolute;
  top: 143px;
  right: 2px;
  background: rgba(80, 80, 80, 0.85);
  border-radius: 2px;
}

.command {
  position: absolute;
  top: 187px;
  left: 452px;
  width: 132px;
  color: #222;
}

.command-input {
  display: block;
  width: 36px;
  height: 16px;
  padding-left: 2px;
  background: #fff;
  border: 1px solid #888;
}

.suggestions {
  list-style: none;
  margin: 0;
  padding: 0;
  background: #fff;
  border: 1px solid #aaa;
}

.suggestions li {
  display: flex;
  align-items: center;
  gap: 2px;
  height: 14px;
}

.suggestions .current {
  color: #fff;
  background: #3399ff;
}

/* layout tabs and status bar */
.bottom {
  display: flex;
  height: 22px;
  background: #3d3b3b;
  border-top: 1px solid #555;
}

.layouts {
  flex: 1;
  display: flex;
  align-items: flex-start;
  padding-left: 7px;
  color: #a8a8a8;
}

.layouts a,
.add {
  height: 14px;
  padding: 0 8px;
  line-height: 15px;
  background: #575757;
  clip-path: polygon(0 0, 100% 0, calc(100% - 5px) 100%, 6px 100%);
}

.layouts .current {
  padding: 0 9px;
  color: #fff;
  background: linear-gradient(#666, #999);
}

.add {
  color: #ddd;
  font-size: 11px;
}

.status {
  display: flex;
  align-items: center;
  gap: 4px;
  width: 401px;
  padding-left: 3px;
  background: #565656;
  border-left: 1px solid #777;
}

.model {
  color: #fff;
  margin-right: 3px;
}

.divider {
  width: 1px;
  height: 18px;
  margin: 0 1px;
  background: #808080;
}

/* site mark over the lower right corner */
.watermark {
  position: fixed;
  right: 10px;
  bottom: 0;
  width: 230px;
  height: 115px;
  padding: 31px 0 0 21px;
  display: flex;
  background: #fff;
  color: #111;
}

.brand {
  display: flex;
  flex-direction: column;
  white-space: nowrap;
}

.brand strong {
  margin-top: 7px;
  font-family: "Liberation Sans", "Noto Sans CJK SC", sans-serif;
  font-size: 25px;
  font-weight: 900;
  line-height: 26px;
}

.brand em {
  font-family: "Noto Sans", sans-serif;
  font-size: 16px;
  font-weight: 500;
  line-height: 18px;
}
```
